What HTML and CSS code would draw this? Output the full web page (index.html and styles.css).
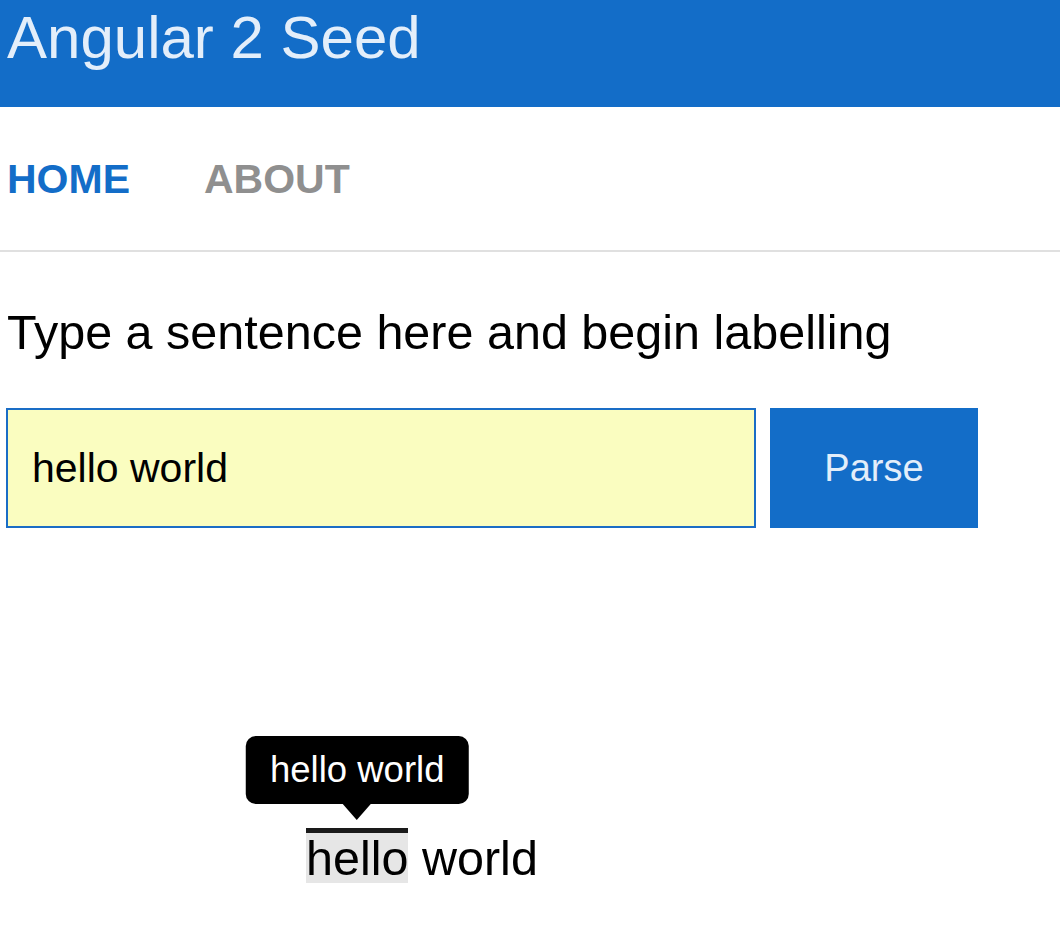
FILE: index.html
```html
<!DOCTYPE html>
<html>
<head>
<meta charset="utf-8">
<title>Angular 2 Seed</title>
<link rel="stylesheet" href="styles.css">
</head>
<body>
<header class="topbar">
  <h1 class="title">Angular 2 Seed</h1>
</header>
<nav class="nav">
  <a class="nav-link active" href="#">HOME</a>
  <a class="nav-link" href="#">ABOUT</a>
</nav>
<main class="main">
  <h2 class="prompt">Type a sentence here and begin labelling</h2>
  <form class="parse-form" onsubmit="return false">
    <input class="sentence-input" type="text" value="hello world">
    <button class="parse-btn" type="button">Parse</button>
  </form>
  <div class="sentence"><span class="token selected">hello<span class="tooltip">hello world</span></span> world</div>
</main>
</body>
</html>
```
FILE: styles.css
```css
html, body {
  margin: 0;
  padding: 0;
  background: #ffffff;
}
body {
  font-family: "Liberation Sans", Arial, Helvetica, sans-serif;
  color: #000;
}
.topbar {
  height: 107px;
  background: #136dc8;
  padding-left: 7px;
  box-sizing: border-box;
}
.title {
  margin: 0;
  font-size: 60px;
  font-weight: normal;
  line-height: 76px;
  color: #e3eefa;
}
.nav {
  height: 145px;
  box-sizing: border-box;
  padding: 0 0 0 7px;
  border-bottom: 2px solid #e0e0e0;
  display: flex;
  align-items: center;
  gap: 74px;
}
.nav-link {
  font-size: 41px;
  font-weight: bold;
  line-height: 50px;
  text-decoration: none;
  color: #8f8f8f;
}
.nav-link.active {
  color: #136dc8;
}
.main {
  padding: 52px 6px 0;
}
.prompt {
  margin: 0;
  font-size: 48.5px;
  font-weight: normal;
  line-height: 56px;
  padding-left: 1px;
}
.parse-form {
  margin: 48px 0 0;
  display: flex;
  gap: 14px;
}
.sentence-input {
  width: 750px;
  height: 120px;
  box-sizing: border-box;
  border: 2px solid #1a6dc6;
  background: #fafdc0;
  font-family: "Liberation Sans", Arial, sans-serif;
  font-size: 41px;
  color: #000;
  padding: 0 0 0 24px;
  margin: 0;
  outline: none;
  border-radius: 0;
}
.parse-btn {
  width: 208px;
  height: 120px;
  border: 0;
  margin: 0;
  background: #136dc8;
  color: #e3eefa;
  font-family: "Liberation Sans", Arial, sans-serif;
  font-size: 38px;
  padding: 0;
  border-radius: 0;
}
.sentence {
  margin-top: 300px;
  padding-left: 300px;
  font-size: 48.5px;
  line-height: 50px;
}
.token {
  display: inline-block;
  position: relative;
}
.token.selected {
  border-top: 5px solid #1a1a1a;
  background: #e6e6e6;
}
.tooltip {
  position: absolute;
  left: 50%;
  bottom: calc(100% + 29px);
  transform: translateX(-50%);
  background: #000;
  color: #fff;
  font-size: 36.5px;
  line-height: 68px;
  padding: 0 24px;
  border-radius: 10px;
  white-space: nowrap;
}
.tooltip::after {
  content: "";
  position: absolute;
  top: 100%;
  left: 50%;
  margin-left: -14px;
  border-left: 14px solid transparent;
  border-right: 14px solid transparent;
  border-top: 16px solid #000;
}
```
